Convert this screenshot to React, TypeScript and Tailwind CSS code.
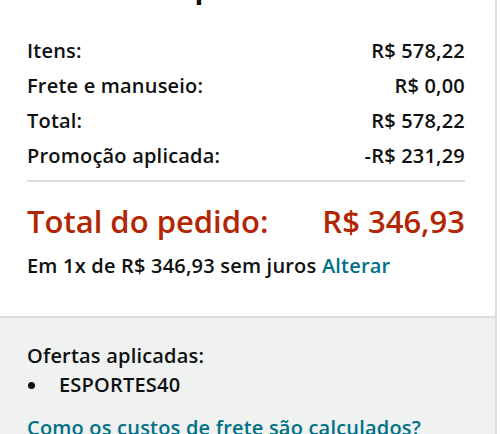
export default function App() {
  const rows = [
    { label: "Itens:", value: "R$ 578,22" },
    { label: "Frete e manuseio:", value: "R$ 0,00" },
    { label: "Total:", value: "R$ 578,22" },
    { label: "Promoção aplicada:", value: "-R$ 231,29" },
  ];

  return (
    <div className="w-[500px] h-[434px] overflow-hidden bg-white text-[#0f1111] font-['Open_Sans',sans-serif]">
      <div className="w-[497px] border-r-2 border-[#dddddd]">
        <div className="pl-[27px] pr-[30px] pb-[38px] border-b-2 border-[#dddddd]">
          <h2 className="mt-[-29px] text-[29px] leading-[32px] font-bold whitespace-nowrap">Resumo do pedido</h2>
          <div className="mt-[30px]">
            {rows.map((r) => (
              <div key={r.label} className="flex justify-between items-center h-[35px] text-[20px] tracking-[0.2px] font-semibold">
                <span>{r.label}</span>
                <span>{r.value}</span>
              </div>
            ))}
          </div>
          <div className="mt-[7px] h-[2px] bg-[#dddddd]" />
          <div className="flex justify-between items-center mt-[19px] text-[#b12704] text-[31px] leading-[40px] font-semibold">
            <span>Total do pedido:</span>
            <span>R$ 346,93</span>
          </div>
          <div className="mt-[13px] text-[20px] tracking-[0.2px] leading-[24px] font-semibold whitespace-nowrap">
            Em 1x de R$ 346,93 sem juros <span className="text-[#007185]">Alterar</span>
          </div>
        </div>
        <div className="bg-[#f0f2f2] px-[27px] pt-[26px] pb-[20px]">
          <div className="text-[20px] tracking-[0.2px] leading-[24px] font-semibold">Ofertas aplicadas:</div>
          <div className="mt-[5px] flex items-center text-[20px] tracking-[0.2px] leading-[24px] font-semibold">
            <span className="w-[7px] h-[7px] ml-[1px] rounded-full bg-[#0f1111]" />
            <span className="ml-[24px]">ESPORTES40</span>
          </div>
          <div className="mt-[19px] text-[20px] tracking-[0.2px] leading-[24px] font-semibold text-[#007185] whitespace-nowrap">Como os custos de frete são calculados?</div>
        </div>
      </div>
    </div>
  );
}
